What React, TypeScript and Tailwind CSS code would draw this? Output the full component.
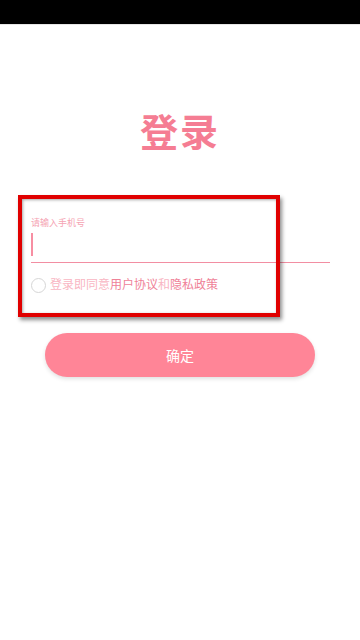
import React from "react";

export default function App() {
  return (
    <div
      className="relative w-[360px] h-[640px] bg-white overflow-hidden"
      style={{ fontFamily: '"Noto Sans", "Noto Sans CJK SC", sans-serif' }}
    >
      <div className="h-6 bg-black" />
      <div className="h-px bg-[#e6e6e6]" />
      <div className="flex justify-center pt-[87px]">
        <h1 className="text-[38px] leading-none font-bold text-[#f57d93] tracking-[2px]">登录</h1>
      </div>
      <div className="mt-[68px] pl-[31px] pr-[30px]">
        <div className="text-[9px] leading-none text-[#f5a3b3]">请输入手机号</div>
        <div className="h-[36px] pt-[6px] border-b border-[#f28ea2]">
          <div className="w-[1.5px] h-[23px] bg-[#f78ea2]" />
        </div>
        <div className="flex items-center mt-[14px] h-[16px]">
          <div className="w-[15px] h-[15px] rounded-full border border-[#d6d6d6] mr-[4px]" />
          <span className="text-[12px] leading-none text-[#f9b6c3]">登录即同意</span>
          <span className="text-[12px] leading-none text-[#ef8298]">用户协议</span>
          <span className="text-[12px] leading-none text-[#f9b6c3]">和</span>
          <span className="text-[12px] leading-none text-[#ef8298]">隐私政策</span>
        </div>
      </div>
      <div className="mt-[40px] px-[45px]">
        <button className="w-full h-[44px] rounded-full bg-[#ff8597] text-white text-[14px] shadow-[0_2px_4px_rgba(0,0,0,0.12)]">
          确定
        </button>
      </div>
      <div className="absolute left-[18px] top-[195px] w-[262px] h-[122px] border-[4px] border-[#e00000] shadow-[2px_3px_4px_rgba(0,0,0,0.45),inset_1px_1px_3px_rgba(0,0,0,0.35)] pointer-events-none" />
    </div>
  );
}
